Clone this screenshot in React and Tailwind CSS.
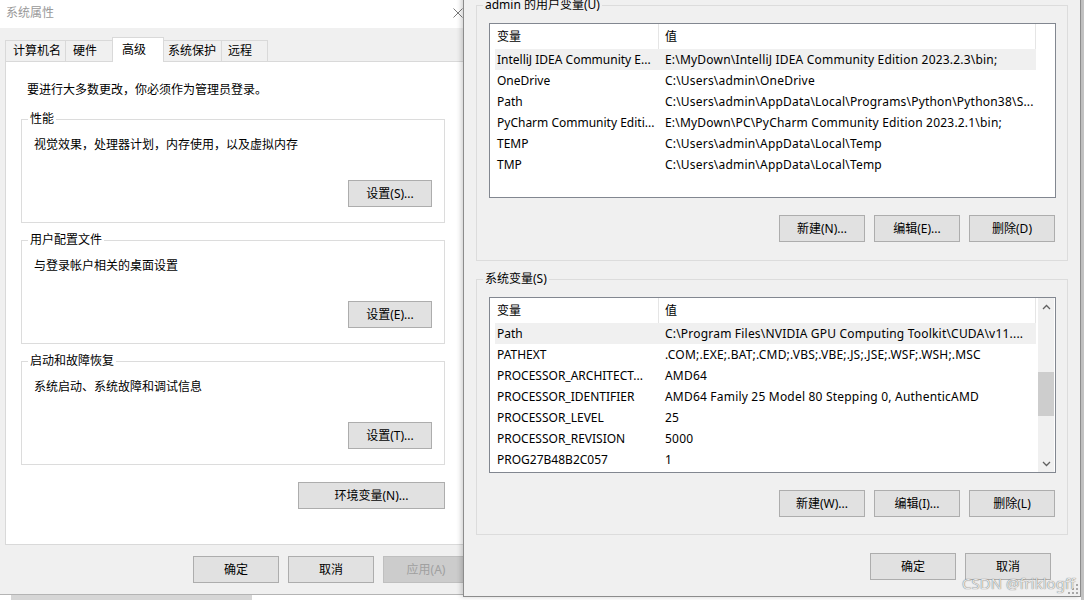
import clsx from 'clsx';

const userVars = [
  ['IntelliJ IDEA Community E...', String.raw`E:\MyDown\IntelliJ IDEA Community Edition 2023.2.3\bin;`],
  ['OneDrive', String.raw`C:\Users\admin\OneDrive`],
  ['Path', String.raw`C:\Users\admin\AppData\Local\Programs\Python\Python38\S...`],
  ['PyCharm Community Editi...', String.raw`E:\MyDown\PC\PyCharm Community Edition 2023.2.1\bin;`],
  ['TEMP', String.raw`C:\Users\admin\AppData\Local\Temp`],
  ['TMP', String.raw`C:\Users\admin\AppData\Local\Temp`],
];

const sysVars = [
  ['Path', String.raw`C:\Program Files\NVIDIA GPU Computing Toolkit\CUDA\v11....`],
  ['PATHEXT', '.COM;.EXE;.BAT;.CMD;.VBS;.VBE;.JS;.JSE;.WSF;.WSH;.MSC'],
  ['PROCESSOR_ARCHITECT...', 'AMD64'],
  ['PROCESSOR_IDENTIFIER', 'AMD64 Family 25 Model 80 Stepping 0, AuthenticAMD'],
  ['PROCESSOR_LEVEL', '25'],
  ['PROCESSOR_REVISION', '5000'],
  ['PROG27B48B2C057', '1'],
];

function Btn({ children, className, disabled }) {
  return (
    <div
      className={clsx(
        'flex h-[27px] shrink-0 items-center justify-center border',
        disabled ? 'border-[#bfbfbf] bg-[#cccccc] text-[#a0a0a0]' : 'border-[#adadad] bg-[#e1e1e1] text-black',
        className
      )}
    >
      {children}
    </div>
  );
}

function Group({ label, className, children }) {
  return (
    <fieldset className={clsx('border border-[#dcdcdc]', className)}>
      <legend className="ml-[6px] px-[2px] leading-[16px]">{label}</legend>
      {children}
    </fieldset>
  );
}

function Chevron({ down }) {
  return (
    <svg width="9" height="6" viewBox="0 0 9 6" className={down ? 'rotate-180' : ''}>
      <path d="M1 5 L4.5 1.5 L8 5" fill="none" stroke="#606060" strokeWidth="1.3" />
    </svg>
  );
}

function Scrollbar() {
  return (
    <div className="mr-[1px] flex w-[16px] flex-col bg-[#f0f0f0]">
      <div className="flex h-[17px] items-center justify-center">
        <Chevron />
      </div>
      <div className="flex-1">
        <div className="mt-[57px] h-[44px] bg-[#cdcdcd]" />
      </div>
      <div className="flex h-[17px] items-center justify-center">
        <Chevron down />
      </div>
    </div>
  );
}

function VarList({ rows, className, scroll }) {
  return (
    <div className={clsx('flex border border-[#828790] bg-white', className)}>
      <div className="min-w-0 flex-1">
        <div className="flex h-[25px] w-[546px]">
          <div className="flex w-[169px] items-center border-r border-[#e5e5e5] pl-[7px]">变量</div>
          <div className="flex w-[377px] items-center border-r border-[#e5e5e5] pl-[6px]">值</div>
        </div>
        {rows.map(([name, value], i) => (
          <div
            key={name}
            className={clsx('ml-[5px] flex h-[21px] w-[541px] items-center', i === 0 && 'bg-[#f0f0f0]')}
          >
            <div className="w-[164px] overflow-hidden whitespace-nowrap pl-[2px]">{name}</div>
            <div className="w-[377px] overflow-hidden whitespace-nowrap pl-[6px] tracking-[0.2px]">{value}</div>
          </div>
        ))}
      </div>
      {scroll && <Scrollbar />}
    </div>
  );
}

function Tab({ children, className, active }) {
  return (
    <div
      className={clsx(
        'flex shrink-0 items-center border border-b-0 border-[#d9d9d9]',
        active ? 'relative z-10 -mb-px -ml-px h-[25px] bg-white' : 'h-[21px] bg-[#f0f0f0]',
        className
      )}
    >
      {children}
    </div>
  );
}

function SettingsGroup({ label, text, button }) {
  return (
    <Group label={label} className="ml-[15px] w-[424px]">
      <div className="px-[12px] pb-[15px]">
        <div className="mt-[10px]">{text}</div>
        <div className="mt-[27px] flex justify-end">
          <Btn className="w-[84px]">{button}</Btn>
        </div>
      </div>
    </Group>
  );
}

function SystemProperties() {
  return (
    <div className="absolute left-0 top-0 flex h-[595px] w-[470px] flex-col border-b border-[#b4b4b4] bg-[#f0f0f0]">
      <div className="flex h-[28px] shrink-0 items-center justify-between bg-white pb-[2px] pl-[6px] pr-[7px]">
        <span className="text-[#999999]">系统属性</span>
        <svg width="10" height="10" viewBox="0 0 10 10">
          <path d="M0.5 0.5 L9.5 9.5 M9.5 0.5 L0.5 9.5" stroke="#7a7a7a" strokeWidth="1" />
        </svg>
      </div>
      <div className="px-[5px] pt-[9px]">
        <div className="flex h-[24px] items-end">
          <Tab className="w-[61px] border-l pl-[7px]">计算机名</Tab>
          <Tab className="w-[47px] border-l-0 pl-[7px]">硬件</Tab>
          <Tab active className="w-[52px] pl-[9px]">高级</Tab>
          <Tab className="w-[58px] border-l-0 pl-[4px]">系统保护</Tab>
          <Tab className="w-[46px] border-l-0 pl-[6px]">远程</Tab>
        </div>
        <div className="h-[484px] border border-[#d9d9d9] bg-white pt-[20px]">
          <div className="pl-[21px]">要进行大多数更改，你必须作为管理员登录。</div>
          <div className="mt-[13px] flex flex-col gap-[9px]">
            <SettingsGroup label="性能" text="视觉效果，处理器计划，内存使用，以及虚拟内存" button="设置(S)..." />
            <SettingsGroup label="用户配置文件" text="与登录帐户相关的桌面设置" button="设置(E)..." />
            <SettingsGroup label="启动和故障恢复" text="系统启动、系统故障和调试信息" button="设置(T)..." />
          </div>
          <div className="ml-[15px] mt-[17px] flex w-[424px] justify-end">
            <Btn className="w-[147px]">环境变量(N)...</Btn>
          </div>
        </div>
      </div>
      <div className="mt-[11px] flex gap-[9px] pl-[193px]">
        <Btn className="w-[86px]">确定</Btn>
        <Btn className="w-[86px]">取消</Btn>
        <Btn disabled className="w-[86px]">应用(A)</Btn>
      </div>
    </div>
  );
}

function VarGroup({ label, rows, scroll, listClass, pb, className, buttons }) {
  return (
    <Group label={label} className={clsx('w-[592px]', className)}>
      <div className={clsx('pl-[12px] pr-[11px]', pb)}>
        <VarList rows={rows} scroll={scroll} className={clsx('mt-[10px]', listClass)} />
        <div className="mt-[17px] flex justify-end gap-[9px] pr-px">
          {buttons.map((b) => (
            <Btn key={b} className="w-[86px]">
              {b}
            </Btn>
          ))}
        </div>
      </div>
    </Group>
  );
}

function EnvironmentVariables() {
  return (
    <div className="absolute left-[463px] top-[-10px] flex h-[607px] w-[618px] flex-col border border-[#8c8c8c] bg-[#f0f0f0] px-[12px] pt-[6px] shadow-[-2px_0_5px_rgba(0,0,0,0.18)]">
      <VarGroup
        label="admin 的用户变量(U)"
        rows={userVars}
        listClass="h-[175px]"
        pb="pb-[18px]"
        buttons={['新建(N)...', '编辑(E)...', '删除(D)']}
      />
      <VarGroup
        label="系统变量(S)"
        rows={sysVars}
        scroll
        listClass="h-[176px]"
        pb="pb-[17px]"
        className="mt-[10px]"
        buttons={['新建(W)...', '编辑(I)...', '删除(L)']}
      />
      <div className="mt-[18px] flex justify-end gap-[9px] pr-[17px]">
        <Btn className="w-[86px]">确定</Btn>
        <Btn className="w-[86px]">取消</Btn>
      </div>
      <svg className="absolute bottom-[2px] right-[2px]" width="10" height="10" viewBox="0 0 10 10">
        <g fill="#a8a8a8">
          <rect x="8" y="0" width="2" height="2" />
          <rect x="4" y="4" width="2" height="2" />
          <rect x="8" y="4" width="2" height="2" />
          <rect x="0" y="8" width="2" height="2" />
          <rect x="4" y="8" width="2" height="2" />
          <rect x="8" y="8" width="2" height="2" />
        </g>
      </svg>
    </div>
  );
}

export default function App() {
  return (
    <div className="relative h-[600px] w-[1084px] overflow-hidden bg-white font-['Noto_Sans','Noto_Sans_CJK_SC',sans-serif] text-[12px] leading-[16px] text-black">
      <div className="absolute left-[11px] top-[595px] h-[5px] w-[241px] bg-[#d6d6d6]" />
      <div className="absolute right-0 top-0 h-full w-[3px] bg-[#c4c4c4]" />
      <SystemProperties />
      <EnvironmentVariables />
      <div className="absolute left-[962px] top-[574px] text-[15px] leading-[18px] text-[#e6e6e6] [text-shadow:0_0_1px_rgba(0,0,0,0.7)]">
        CSDN @friklogff
      </div>
    </div>
  );
}
